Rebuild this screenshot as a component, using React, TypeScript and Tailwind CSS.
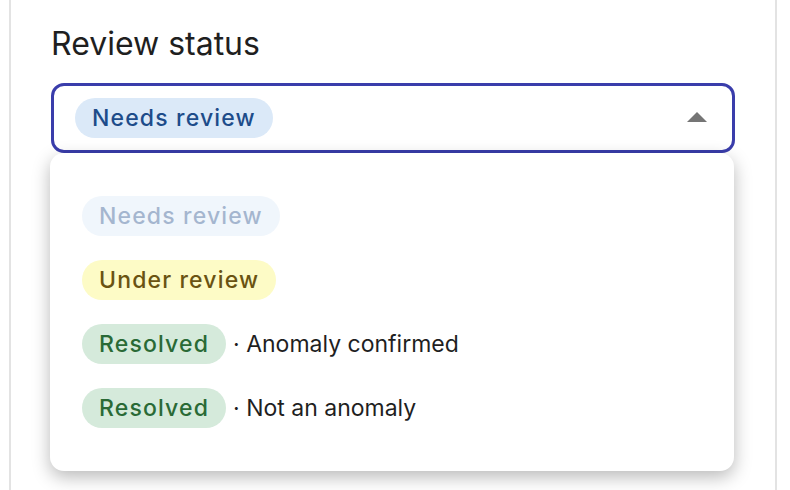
import React from "react";

const font = { fontFamily: "Inter, 'Noto Sans', sans-serif" };

function Chip({ label, cls }: { label: string; cls: string }) {
  return (
    <span
      className={`inline-flex h-[40px] items-center rounded-full px-[17px] text-[23px] font-[450] tracking-[0.05em] ${cls}`}
    >
      {label}
    </span>
  );
}

export default function App() {
  return (
    <div className="h-[490px] w-[790px] overflow-hidden bg-white" style={font}>
      <div className="ml-[9px] h-full w-[768px] border-x-2 border-[#e3e3e3] bg-white pl-[40px] pr-[40px] pt-[25px]">
        <h2 className="text-[32px] leading-[38px] font-normal text-[#1f1f1f]">Review status</h2>
        <div className="relative mt-[20px] w-[684px]">
          <div className="flex h-[70px] items-center justify-between rounded-[13px] border-[3px] border-[#3a3dab] bg-white pl-[21px] pr-[25px]">
            <Chip label="Needs review" cls="bg-[#dbe9f8] text-[#1d4c8a]" />
            <svg width="20" height="10" viewBox="0 0 20 10" className="mb-[2px]">
              <path d="M0 10 L10 0 L20 10 Z" fill="#757575" />
            </svg>
          </div>
          <div className="absolute left-[-1px] top-[70px] w-[684px] rounded-[14px] bg-white px-[32px] py-[31px] shadow-[0_6px_18px_rgba(0,0,0,0.28)]">
            <div className="flex flex-col">
              <div className="flex items-center py-[12px]">
                <Chip label="Needs review" cls="bg-[#dbe9f8] text-[#1d4c8a] opacity-40" />
              </div>
              <div className="flex items-center py-[12px]">
                <Chip label="Under review" cls="bg-[#fdfbc6] text-[#6a5312]" />
              </div>
              <div className="flex items-center py-[12px]">
                <Chip label="Resolved" cls="bg-[#d5eadb] text-[#2a6a36]" />
                <span className="ml-[7px] text-[23px] text-[#1f1f1f]">· Anomaly confirmed</span>
              </div>
              <div className="flex items-center py-[12px]">
                <Chip label="Resolved" cls="bg-[#d5eadb] text-[#2a6a36]" />
                <span className="ml-[7px] text-[23px] text-[#1f1f1f]">· Not an anomaly</span>
              </div>
            </div>
          </div>
        </div>
      </div>
    </div>
  );
}
